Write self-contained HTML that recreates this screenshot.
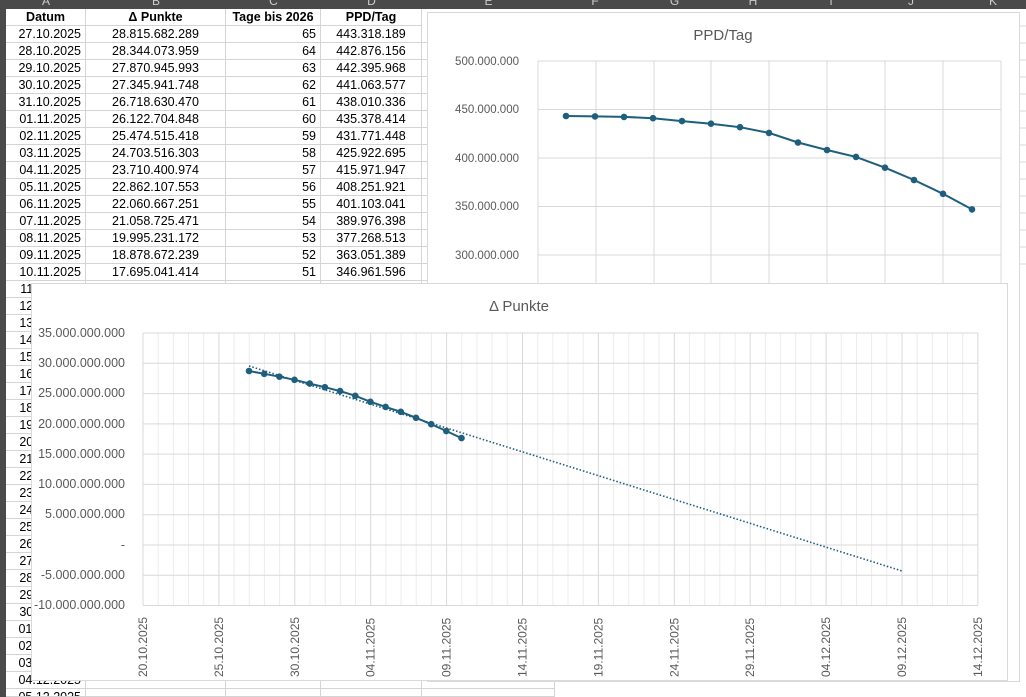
<!DOCTYPE html>
<html style="overflow:hidden;width:1026px;height:697px"><head><meta charset="utf-8"><style>
html,body{overflow:hidden}
body{margin:0;width:1026px;height:697px;background:#fff;font-family:"Liberation Sans",Arial,sans-serif;position:relative}
.hdr{position:absolute;top:0;left:0;width:1026px;height:9px;background:#4a4a4a}
.rh{position:absolute;top:0;left:0;width:6px;height:697px;background:#4a4a4a}
.c{position:absolute;font-size:12.5px;color:#000;height:17px;line-height:17px;box-sizing:border-box;border-right:1px solid #d4d4d4;border-bottom:1px solid #d4d4d4;white-space:nowrap;overflow:hidden}
.cl{position:absolute;top:-6px;font-size:12px;color:#ccc;text-align:center}
svg text{font-family:"Liberation Sans",Arial,sans-serif}
</style></head><body>
<div class="hdr"></div><div class="rh"></div>
<div class="cl" style="left:6px;width:80px">A</div><div class="cl" style="left:86px;width:140px">B</div><div class="cl" style="left:226px;width:95px">C</div><div class="cl" style="left:321px;width:101px">D</div>
<div class="cl" style="left:422px;width:133px">E</div><div class="cl" style="left:555px;width:80px">F</div><div class="cl" style="left:635px;width:79px">G</div><div class="cl" style="left:714px;width:78px">H</div><div class="cl" style="left:792px;width:78px">I</div><div class="cl" style="left:870px;width:82px">J</div><div class="cl" style="left:952px;width:82px">K</div>
<div id="t"></div>
<script>
var d=["27.10.2025","28.10.2025","29.10.2025","30.10.2025","31.10.2025","01.11.2025","02.11.2025","03.11.2025","04.11.2025","05.11.2025","06.11.2025","07.11.2025","08.11.2025","09.11.2025","10.11.2025","11.11.2025","12.11.2025","13.11.2025","14.11.2025","15.11.2025","16.11.2025","17.11.2025","18.11.2025","19.11.2025","20.11.2025","21.11.2025","22.11.2025","23.11.2025","24.11.2025","25.11.2025","26.11.2025","27.11.2025","28.11.2025","29.11.2025","30.11.2025","01.12.2025","02.12.2025","03.12.2025","04.12.2025","05.12.2025"];
var b=["28.815.682.289","28.344.073.959","27.870.945.993","27.345.941.748","26.718.630.470","26.122.704.848","25.474.515.418","24.703.516.303","23.710.400.974","22.862.107.553","22.060.667.251","21.058.725.471","19.995.231.172","18.878.672.239","17.695.041.414"];
var p=["443.318.189","442.876.156","442.395.968","441.063.577","438.010.336","435.378.414","431.771.448","425.922.695","415.971.947","408.251.921","401.103.041","389.976.398","377.268.513","363.051.389","346.961.596"];
var h='';
function c(x,w,y,t,al,bold){var hh=Math.min(17,697-y);h+='<div class="c" style="left:'+x+'px;top:'+y+'px;width:'+w+'px;height:'+hh+'px;text-align:'+al+';padding:0 4px;'+(bold?'font-weight:bold;':'')+'">'+t+'</div>';}
c(6,80,9,"Datum","center",1);c(86,140,9,"Δ Punkte","center",1);c(226,95,9,"Tage bis 2026","center",1);c(321,101,9,"PPD/Tag","center",1);
for(var i=0;i<d.length;i++){var y=26+17*i;c(6,80,y,d[i],"right");c(86,140,y,b[i]||"",b[i]?"center":"left");c(226,95,y,b[i]?(65-i):"","right");c(321,101,y,p[i]||"","center");c(422,133,y,"","left");}
document.getElementById('t').innerHTML=h;
</script>
<svg width="1026" height="697" style="position:absolute;left:0;top:0">
<g stroke="#d9d9d9"><line x1="1020" y1="26" x2="1026" y2="26"/><line x1="1020" y1="43" x2="1026" y2="43"/><line x1="1020" y1="60" x2="1026" y2="60"/><line x1="1020" y1="77" x2="1026" y2="77"/><line x1="1020" y1="94" x2="1026" y2="94"/><line x1="1020" y1="111" x2="1026" y2="111"/><line x1="1020" y1="128" x2="1026" y2="128"/><line x1="1020" y1="145" x2="1026" y2="145"/><line x1="1020" y1="162" x2="1026" y2="162"/><line x1="1020" y1="179" x2="1026" y2="179"/><line x1="1020" y1="196" x2="1026" y2="196"/><line x1="1020" y1="213" x2="1026" y2="213"/><line x1="1020" y1="230" x2="1026" y2="230"/><line x1="1020" y1="247" x2="1026" y2="247"/><line x1="1020" y1="264" x2="1026" y2="264"/></g>
<!-- chart 1 -->
<rect x="427.5" y="12.5" width="592" height="669" fill="#fff" stroke="#d9d9d9"/>
<text x="723" y="40" font-size="15" fill="#595959" text-anchor="middle">PPD/Tag</text>
<g stroke="#d9d9d9" fill="none">
<line x1="538" y1="61" x2="1001" y2="61"/><line x1="538" y1="109.5" x2="1001" y2="109.5"/><line x1="538" y1="158" x2="1001" y2="158"/><line x1="538" y1="206.5" x2="1001" y2="206.5"/><line x1="538" y1="255" x2="1001" y2="255"/>
<line x1="538" y1="61" x2="538" y2="290"/><line x1="596" y1="61" x2="596" y2="290"/><line x1="654" y1="61" x2="654" y2="290"/><line x1="711" y1="61" x2="711" y2="290"/><line x1="769" y1="61" x2="769" y2="290"/><line x1="827" y1="61" x2="827" y2="290"/><line x1="885" y1="61" x2="885" y2="290"/><line x1="943" y1="61" x2="943" y2="290"/><line x1="1001" y1="61" x2="1001" y2="290"/>
</g>
<g font-size="11.5" fill="#595959" text-anchor="end"><text x="519" y="65">500.000.000</text><text x="519" y="113">450.000.000</text><text x="519" y="162">400.000.000</text><text x="519" y="210">350.000.000</text><text x="519" y="259">300.000.000</text></g>
<polyline fill="none" stroke="#1f5f7e" stroke-width="2" points="566,116 595,116.4 624,116.9 653,118.2 682,121.1 711,123.7 740,127.2 769,132.9 798,142.5 827,150 856,156.9 885,167.7 914,180 943,193.8 972,209.4"/>
<g fill="#1f5f7e"><circle cx="566" cy="116" r="3.3"/><circle cx="595" cy="116.4" r="3.3"/><circle cx="624" cy="116.9" r="3.3"/><circle cx="653" cy="118.2" r="3.3"/><circle cx="682" cy="121.1" r="3.3"/><circle cx="711" cy="123.7" r="3.3"/><circle cx="740" cy="127.2" r="3.3"/><circle cx="769" cy="132.9" r="3.3"/><circle cx="798" cy="142.5" r="3.3"/><circle cx="827" cy="150" r="3.3"/><circle cx="856" cy="156.9" r="3.3"/><circle cx="885" cy="167.7" r="3.3"/><circle cx="914" cy="180" r="3.3"/><circle cx="943" cy="193.8" r="3.3"/><circle cx="972" cy="209.4" r="3.3"/></g>
<!-- chart 2 -->
<rect x="31.5" y="283.5" width="976" height="397" fill="#fff" stroke="#d9d9d9"/>
<text x="519" y="311" font-size="15" fill="#595959" text-anchor="middle">Δ Punkte</text>
<g id="g2" stroke="#ececec"></g>
<g stroke="#d9d9d9">
<line x1="143" y1="333" x2="978" y2="333"/><line x1="143" y1="363.3" x2="978" y2="363.3"/><line x1="143" y1="393.6" x2="978" y2="393.6"/><line x1="143" y1="423.9" x2="978" y2="423.9"/><line x1="143" y1="454.1" x2="978" y2="454.1"/><line x1="143" y1="484.4" x2="978" y2="484.4"/><line x1="143" y1="514.7" x2="978" y2="514.7"/><line x1="143" y1="545" x2="978" y2="545"/><line x1="143" y1="575.3" x2="978" y2="575.3"/><line x1="143" y1="605.5" x2="978" y2="605.5"/>
</g>
<g font-size="12.5" fill="#595959" text-anchor="end"><text x="125" y="337">35.000.000.000</text><text x="125" y="367">30.000.000.000</text><text x="125" y="397">25.000.000.000</text><text x="125" y="428">20.000.000.000</text><text x="125" y="458">15.000.000.000</text><text x="125" y="488">10.000.000.000</text><text x="125" y="518">5.000.000.000</text><text x="125" y="549">-</text><text x="125" y="579">-5.000.000.000</text><text x="125" y="609">-10.000.000.000</text></g>
<g id="xl" font-size="12" fill="#595959"></g>
<line x1="249" y1="366" x2="902" y2="571" stroke="#1f5f7e" stroke-width="1.6" stroke-dasharray="1.5,2"/>
<polyline fill="none" stroke="#1f5f7e" stroke-width="2" points="249,371 264.2,373.8 279.4,376.7 294.5,379.8 309.7,383.6 324.9,387.2 340.1,391.1 355.3,395.8 370.4,401.8 385.6,406.9 400.8,411.8 416,417.8 431.2,424.2 446.3,431 461.5,438.1"/>
<g fill="#1f5f7e"><circle cx="249" cy="371" r="3.3"/><circle cx="264.2" cy="373.8" r="3.3"/><circle cx="279.4" cy="376.7" r="3.3"/><circle cx="294.5" cy="379.8" r="3.3"/><circle cx="309.7" cy="383.6" r="3.3"/><circle cx="324.9" cy="387.2" r="3.3"/><circle cx="340.1" cy="391.1" r="3.3"/><circle cx="355.3" cy="395.8" r="3.3"/><circle cx="370.4" cy="401.8" r="3.3"/><circle cx="385.6" cy="406.9" r="3.3"/><circle cx="400.8" cy="411.8" r="3.3"/><circle cx="416" cy="417.8" r="3.3"/><circle cx="431.2" cy="424.2" r="3.3"/><circle cx="446.3" cy="431" r="3.3"/><circle cx="461.5" cy="438.1" r="3.3"/></g>
</svg>
<script>
var g=document.getElementById('g2'),s='',l='';
var L=["20.10.2025","25.10.2025","30.10.2025","04.11.2025","09.11.2025","14.11.2025","19.11.2025","24.11.2025","29.11.2025","04.12.2025","09.12.2025","14.12.2025"];
for(var i=0;i<=55;i++){var x=(143+i*15.18).toFixed(1);s+='<line x1="'+x+'" y1="333" x2="'+x+'" y2="605" '+(i%5==0?'stroke="#d9d9d9"':'')+'/>';}
g.innerHTML=s;
for(var k=0;k<12;k++){var x=143+k*75.9+4;l+='<text transform="translate('+x+',677) rotate(-90)">'+L[k]+'</text>';}
document.getElementById('xl').innerHTML=l;
</script>
</body></html>
